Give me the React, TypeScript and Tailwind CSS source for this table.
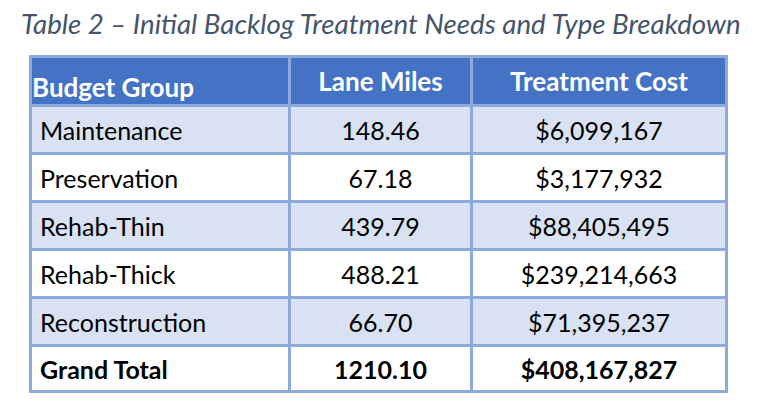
const rows = [
  { group: 'Maintenance', miles: '148.46', cost: '$6,099,167', shaded: true },
  { group: 'Preservation', miles: '67.18', cost: '$3,177,932', shaded: false },
  { group: 'Rehab-Thin', miles: '439.79', cost: '$88,405,495', shaded: true },
  { group: 'Rehab-Thick', miles: '488.21', cost: '$239,214,663', shaded: false },
  { group: 'Reconstruction', miles: '66.70', cost: '$71,395,237', shaded: true },
];

const App = () => {
  return (
    <div className="w-[768px] h-[418px] bg-white overflow-hidden" style={{ fontFamily: 'Lato, "Open Sans", sans-serif' }}>
      <div className="pl-[21px] pt-[7px] h-[55px]">
        <h1 className="italic text-[27.7px] leading-[34px] text-[#44546a] font-normal whitespace-nowrap">
          Table 2 – Initial Backlog Treatment Needs and Type Breakdown
        </h1>
      </div>
      <table className="ml-[29px] w-[699px] border-collapse border-[3px] border-[#8eaadb] text-[25px] text-black">
        <thead>
          <tr className="bg-[#4472c4] text-white font-bold h-[49px] text-[26px]">
            <th className="w-[259px] border-[3px] border-[#8eaadb] text-left align-bottom pl-0 pb-[3px] leading-[28px]">
              Budget Group
            </th>
            <th className="w-[182px] border-[3px] border-[#8eaadb] text-center align-middle leading-[28px]">
              Lane Miles
            </th>
            <th className="border-[3px] border-[#8eaadb] text-center align-middle leading-[28px]">
              Treatment Cost
            </th>
          </tr>
        </thead>
        <tbody>
          {rows.map((row) => (
            <tr key={row.group} className={`h-[48px] ${row.shaded ? 'bg-[#d9e2f3]' : 'bg-white'}`}>
              <td className="border-[3px] border-[#8eaadb] pl-[8px] leading-[28px]">{row.group}</td>
              <td className="border-[3px] border-[#8eaadb] text-center leading-[28px]">{row.miles}</td>
              <td className="border-[3px] border-[#8eaadb] text-center leading-[28px]">{row.cost}</td>
            </tr>
          ))}
          <tr className="h-[46px] bg-white font-bold">
            <td className="border-[3px] border-[#8eaadb] pl-[8px] leading-[28px]">Grand Total</td>
            <td className="border-[3px] border-[#8eaadb] text-center leading-[28px]">1210.10</td>
            <td className="border-[3px] border-[#8eaadb] text-center leading-[28px]">$408,167,827</td>
          </tr>
        </tbody>
      </table>
    </div>
  );
};

export default App;
